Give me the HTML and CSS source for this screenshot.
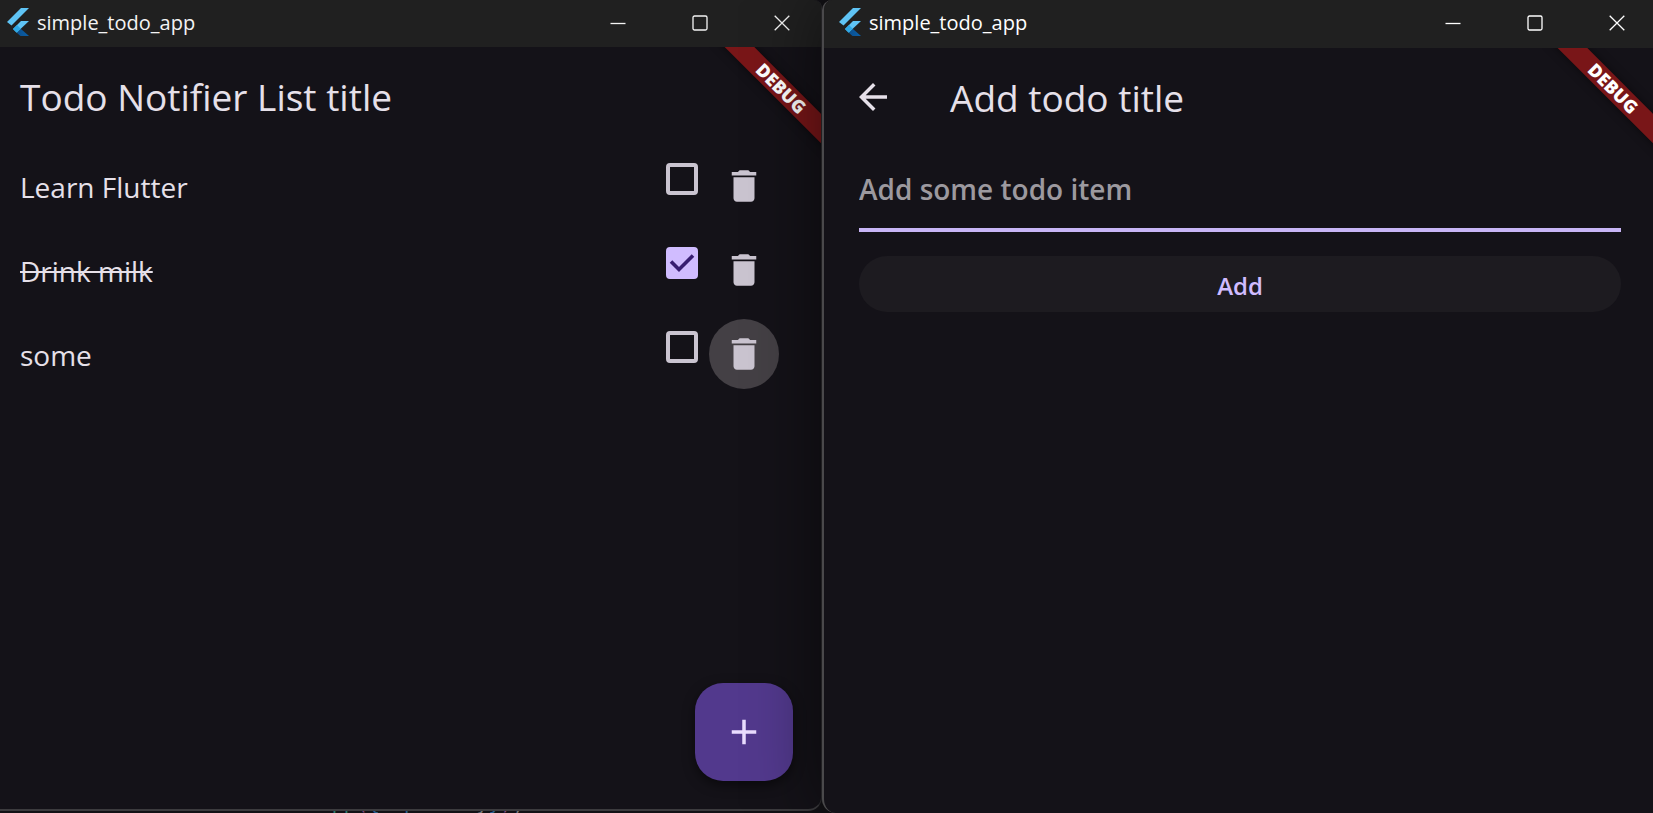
FILE: index.html
```html
<!DOCTYPE html>
<html lang="en">
<head>
<meta charset="utf-8">
<title>simple_todo_app</title>
<link rel="stylesheet" href="styles.css">
</head>
<body>
<svg class="defs" aria-hidden="true">
  <defs>
    <linearGradient id="tail" x1="0" y1="0" x2="1" y2="0">
      <stop offset="0" stop-color="#0b4f8f"/><stop offset="1" stop-color="#0a5fa8"/>
    </linearGradient>
    <symbol id="flutter" viewBox="0 0 22 28">
      <path fill="#5fc4f5" d="M14 0h8L4.500 17.500 0 14z"/>
      <path fill="#5fc4f5" d="M14 13h8L13.500 21 9.500 24.500 6 21z"/>
      <path fill="#2ea8e6" d="M6 21l4-4 4 4-4 4z"/>
      <path fill="url(#tail)" d="M10 25l4-4 8 7h-8.500z"/>
    </symbol>
    <symbol id="trash" viewBox="0 0 24 24">
      <path d="M6 19c0 1.100.9 2 2 2h8c1.100 0 2-.9 2-2V7H6v12zM19 4h-3.500l-1-1h-5l-1 1H5v2h14V4z"/>
    </symbol>
    <symbol id="minimize" viewBox="0 0 16 16"><path d="M0.500 8.500h15"/></symbol>
    <symbol id="maximize" viewBox="0 0 16 16"><rect x="1" y="1" width="14" height="14" rx="1.500"/></symbol>
    <symbol id="close" viewBox="0 0 16 16"><path d="M.7.7l14.600 14.600M15.300.7L.7 15.300"/></symbol>
  </defs>
</svg>
<div class="desktop">
  <div class="stage">
    <section class="window window-list">
      <header class="titlebar">
        <svg class="logo" aria-hidden="true"><use href="#flutter"/></svg>
        <span class="app-name">simple_todo_app</span>
        <div class="controls">
          <button type="button" aria-label="Minimize"><svg><use href="#minimize"/></svg></button>
          <button type="button" aria-label="Maximize"><svg><use href="#maximize"/></svg></button>
          <button type="button" aria-label="Close"><svg><use href="#close"/></svg></button>
        </div>
      </header>
      <main class="screen">
        <div class="ribbon">DEBUG</div>
        <div class="appbar"><h1>Todo Notifier List title</h1></div>
        <ul class="todos">
          <li>
            <label for="t1">Learn Flutter</label>
            <span class="check"><input type="checkbox" id="t1"></span>
            <button type="button" class="delete" aria-label="Delete Learn Flutter"><svg><use href="#trash"/></svg></button>
          </li>
          <li>
            <label for="t2" class="done">Drink milk</label>
            <span class="check"><input type="checkbox" id="t2" checked><svg viewBox="0 0 32 32"><path d="M5 14.500l8 8L27 8.500"/></svg></span>
            <button type="button" class="delete" aria-label="Delete Drink milk"><svg><use href="#trash"/></svg></button>
          </li>
          <li>
            <label for="t3">some</label>
            <span class="check"><input type="checkbox" id="t3"></span>
            <button type="button" class="delete hovered" aria-label="Delete some"><svg><use href="#trash"/></svg></button>
          </li>
        </ul>
        <button type="button" class="fab" aria-label="Add todo"><svg viewBox="0 0 24 24"><path d="M19 13h-6v6h-2v-6H5v-2h6V5h2v6h6z"/></svg></button>
      </main>
    </section>
    <div class="code" aria-hidden="true"><code>const <span class="type">TodoNotifierApp</span><span class="paren">(</span><span class="brace">{super</span>.key<span class="brace">}</span><span class="paren">)</span>;</code></div>
  </div>
  <section class="window window-add">
    <header class="titlebar">
      <svg class="logo" aria-hidden="true"><use href="#flutter"/></svg>
      <span class="app-name">simple_todo_app</span>
      <div class="controls">
        <button type="button" aria-label="Minimize"><svg><use href="#minimize"/></svg></button>
        <button type="button" aria-label="Maximize"><svg><use href="#maximize"/></svg></button>
        <button type="button" aria-label="Close"><svg><use href="#close"/></svg></button>
      </div>
    </header>
    <main class="screen">
      <div class="ribbon">DEBUG</div>
      <div class="appbar">
        <button type="button" class="back" aria-label="Back"><svg viewBox="4 4 16 16"><path d="M20 11H7.830l5.590-5.590L12 4l-8 8 8 8 1.410-1.410L7.830 13H20z"/></svg></button>
        <h1>Add todo title</h1>
      </div>
      <form class="add-form">
        <input type="text" aria-label="Add some todo item" placeholder="Add some todo item">
        <button type="button">Add</button>
      </form>
    </main>
  </section>
</div>
</body>
</html>
```
FILE: styles.css
```css
* {
  box-sizing: border-box;
}

body {
  margin: 0;
  background: #121115;
  color: #e6e0e9;
  font-family: "Open Sans", "Noto Sans", sans-serif;
}

button {
  margin: 0;
  padding: 0;
  border: 0;
  background: none;
  color: inherit;
  font: inherit;
}

.defs {
  position: absolute;
  width: 0;
  height: 0;
}

.desktop {
  display: grid;
  grid-template-columns: 822fr 831fr;
  height: 100vh;
  overflow: hidden;
}

.stage {
  display: flex;
  flex-direction: column;
  min-width: 0;
}

.window {
  display: flex;
  flex-direction: column;
  overflow: hidden;
  background: #141218;
}

.window-list {
  flex: 1;
  border-right: 1px solid #2c2b2e;
  border-bottom: 2px solid #3c3b3e;
  border-radius: 0 8px 14px 0;
}

.window-add {
  z-index: 1;
  border-left: 2px solid #4a494b;
  border-radius: 10px 0 0 14px;
  box-shadow: 0 0 70px rgba(0, 0, 0, 0.55);
}

.titlebar {
  display: flex;
  align-items: center;
  height: 47px;
  padding: 0 3px 2px 7px;
  background: #202020;
  color: #f4f4f4;
}

.window-add .titlebar {
  height: 48px;
  padding: 0 0 2px 15px;
  color: #fff;
}

.logo {
  width: 22px;
  height: 28px;
  margin: 0 8px 2px 0;
}

.app-name {
  flex: 1;
  font-size: 20px;
  line-height: 28px;
}

.controls {
  display: flex;
  gap: 10px;
}

.controls button {
  display: grid;
  place-items: center;
  width: 72px;
  height: 40px;
}

.controls svg {
  width: 16px;
  height: 16px;
  fill: none;
  stroke: currentColor;
  stroke-width: 1.3;
}

.screen {
  position: relative;
  flex: 1;
  overflow: hidden;
}

.ribbon {
  position: absolute;
  top: 31px;
  right: -40px;
  width: 160px;
  transform: rotate(45deg);
  background: #791618;
  box-shadow: 0 0 10px rgba(0, 0, 0, 0.5);
  color: #fff;
  font-size: 18px;
  font-weight: 800;
  line-height: 21px;
  text-align: center;
}

.window-add .ribbon {
  top: 30px;
}

.appbar {
  display: flex;
  align-items: center;
  height: 98px;
  padding: 0 20px;
}

h1 {
  margin: 0;
  padding-top: 2px;
  font-size: 37px;
  font-weight: 400;
  line-height: 52px;
}

.todos {
  margin: 0;
  padding: 0 42px 0 20px;
  list-style: none;
}

.todos li {
  display: flex;
  align-items: center;
  height: 84px;
  padding-bottom: 2px;
}

.todos label {
  flex: 1;
  padding-top: 2px;
  font-size: 28px;
  line-height: 40px;
}

.todos .done {
  text-decoration: line-through;
  text-decoration-thickness: 2px;
}

.todos label.done {
  flex: none;
  margin-right: auto;
}

.check {
  position: relative;
  align-self: flex-start;
  width: 32px;
  height: 32px;
  margin: 18px 11px 0 0;
}

.check input {
  display: block;
  width: 32px;
  height: 32px;
  margin: 0;
  appearance: none;
  border: 4px solid #cac4d0;
  border-radius: 4px;
}

.check input:checked {
  border-color: #d0bcff;
  background: #d0bcff;
}

.check svg {
  position: absolute;
  inset: 0;
  fill: none;
  stroke: #381e72;
  stroke-width: 3.6;
  pointer-events: none;
}

.delete {
  display: grid;
  place-items: center;
  width: 70px;
  height: 70px;
  border-radius: 50%;
}

.hovered {
  background: #444045;
}

.delete svg {
  width: 42px;
  height: 42px;
  fill: #cac4d0;
}

.fab {
  position: absolute;
  right: 28px;
  bottom: 28px;
  display: grid;
  place-items: center;
  width: 98px;
  height: 98px;
  border-radius: 28px;
  background: #52398d;
  box-shadow: 0 4px 12px rgba(0, 0, 0, 0.5);
}

.fab svg {
  width: 42px;
  height: 42px;
  fill: #eaddff;
}

.code {
  height: 2px;
  padding-left: 103px;
  overflow: hidden;
}

.code code {
  display: block;
  margin-top: -20px;
  color: #77777a;
  font-family: "DejaVu Sans Mono", monospace;
  font-size: 20px;
  line-height: 24px;
  white-space: nowrap;
}

.code .type {
  color: #2b7a6b;
}

.code .paren {
  color: #834a80;
}

.code .brace {
  color: #2a5f8e;
}

.window-add .appbar {
  gap: 63px;
  padding: 0 35px;
}

.back {
  display: grid;
  place-items: center;
  width: 28px;
  height: 42px;
}

.back svg {
  width: 28px;
  height: 28px;
  fill: #e6e0e9;
}

.add-form {
  display: flex;
  flex-direction: column;
  gap: 24px;
  padding: 0 32px 0 35px;
}

.add-form input {
  width: 100%;
  height: 86px;
  padding: 4px 0 0;
  border: 0;
  border-bottom: 4px solid #c8b5f6;
  outline: 0;
  background: none;
  color: #e6e0e9;
  font: 600 28px/40px "Open Sans", "Noto Sans", sans-serif;
}

.add-form input::placeholder {
  color: #9c999f;
  opacity: 1;
}

.add-form button {
  height: 56px;
  padding-top: 4px;
  border-radius: 28px;
  background: #1d1b20;
  color: #d0bcff;
  font-size: 24px;
  font-weight: 600;
  line-height: 32px;
}
```
